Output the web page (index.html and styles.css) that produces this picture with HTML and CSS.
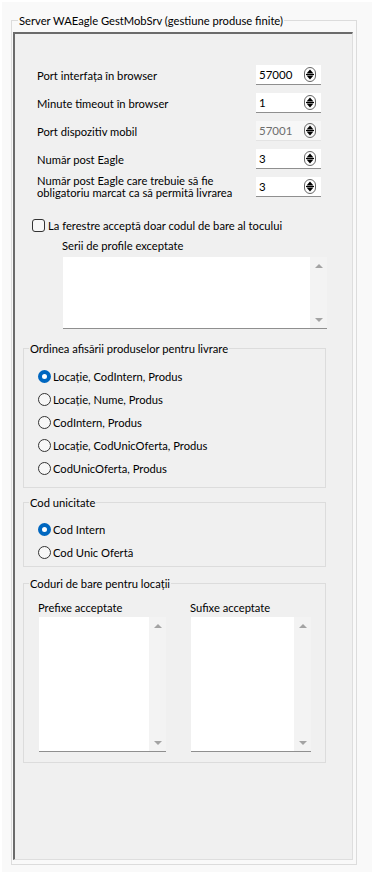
FILE: index.html
```html
<!DOCTYPE html>
<html lang="ro">
<head>
<meta charset="utf-8">
<title>Server WAEagle GestMobSrv</title>
<link rel="stylesheet" href="styles.css">
</head>
<body>
<div class="window">
  <fieldset class="group outer">
    <legend>Server WAEagle GestMobSrv (gestiune produse finite)</legend>
    <div class="panel">
      <div class="fields">
        <div class="label">Port interfața în browser</div>
        <div class="spin"><span class="val">57000</span><svg class="spin-ic" width="12" height="15" viewBox="0 0 12 15"><rect x="0.5" y="0.5" width="11" height="14" rx="5.5" fill="none" stroke="#666"/><path d="M6 2.5L9.5 6.5H2.5Z M2.5 8.5H9.5L6 12.5Z" fill="#000"/><path d="M2 7.5H10" stroke="#000"/></svg></div>
        <div class="label">Minute timeout în browser</div>
        <div class="spin"><span class="val">1</span><svg class="spin-ic" width="12" height="15" viewBox="0 0 12 15"><rect x="0.5" y="0.5" width="11" height="14" rx="5.5" fill="none" stroke="#666"/><path d="M6 2.5L9.5 6.5H2.5Z M2.5 8.5H9.5L6 12.5Z" fill="#000"/><path d="M2 7.5H10" stroke="#000"/></svg></div>
        <div class="label">Port dispozitiv mobil</div>
        <div class="spin disabled"><span class="val">57001</span><svg class="spin-ic" width="12" height="15" viewBox="0 0 12 15"><rect x="0.5" y="0.5" width="11" height="14" rx="5.5" fill="none" stroke="#666"/><path d="M6 2.5L9.5 6.5H2.5Z M2.5 8.5H9.5L6 12.5Z" fill="#000"/><path d="M2 7.5H10" stroke="#000"/></svg></div>
        <div class="label">Număr post Eagle</div>
        <div class="spin"><span class="val">3</span><svg class="spin-ic" width="12" height="15" viewBox="0 0 12 15"><rect x="0.5" y="0.5" width="11" height="14" rx="5.5" fill="none" stroke="#666"/><path d="M6 2.5L9.5 6.5H2.5Z M2.5 8.5H9.5L6 12.5Z" fill="#000"/><path d="M2 7.5H10" stroke="#000"/></svg></div>
        <div class="label two">Număr post Eagle care trebuie să fie<br>obligatoriu marcat ca să permită livrarea</div>
        <div class="spin"><span class="val">3</span><svg class="spin-ic" width="12" height="15" viewBox="0 0 12 15"><rect x="0.5" y="0.5" width="11" height="14" rx="5.5" fill="none" stroke="#666"/><path d="M6 2.5L9.5 6.5H2.5Z M2.5 8.5H9.5L6 12.5Z" fill="#000"/><path d="M2 7.5H10" stroke="#000"/></svg></div>
      </div>

      <div class="check"><span class="box"></span><span>La ferestre acceptă doar codul de bare al tocului</span></div>

      <div class="sub">
        <div class="sublabel">Serii de profile exceptate</div>
        <div class="listbox series">
          <div class="content"></div>
          <div class="sb"><span class="arr up"></span><span class="arr down"></span></div>
        </div>
      </div>

      <fieldset class="group g-order">
        <legend>Ordinea afisării produselor pentru livrare</legend>
        <div class="radio on"><span class="dot"></span><span>Locație, CodIntern, Produs</span></div>
        <div class="radio"><span class="dot"></span><span>Locație, Nume, Produs</span></div>
        <div class="radio"><span class="dot"></span><span>CodIntern, Produs</span></div>
        <div class="radio"><span class="dot"></span><span>Locație, CodUnicOferta, Produs</span></div>
        <div class="radio"><span class="dot"></span><span>CodUnicOferta, Produs</span></div>
      </fieldset>

      <fieldset class="group g-cod">
        <legend>Cod unicitate</legend>
        <div class="radio on"><span class="dot"></span><span>Cod Intern</span></div>
        <div class="radio"><span class="dot"></span><span>Cod Unic Ofertă</span></div>
      </fieldset>

      <fieldset class="group g-bar">
        <legend>Coduri de bare pentru locații</legend>
        <div class="cols">
          <div class="col c1">
            <div class="collabel">Prefixe acceptate</div>
            <div class="listbox tall">
              <div class="content"></div>
              <div class="sb"><span class="arr up"></span><span class="arr down"></span></div>
            </div>
          </div>
          <div class="col c2">
            <div class="collabel">Sufixe acceptate</div>
            <div class="listbox tall">
              <div class="content"></div>
              <div class="sb"><span class="arr up"></span><span class="arr down"></span></div>
            </div>
          </div>
        </div>
      </fieldset>
    </div>
  </fieldset>
</div>
</body>
</html>
```

FILE: styles.css
```css
* { box-sizing: border-box; }
html, body { margin: 0; padding: 0; background: #ffffff; }
body {
  font-family: "Lato", "Noto Sans", "Liberation Sans", sans-serif;
  font-size: 11.2px;
  line-height: 15px;
  color: #000;
}
.window {
  margin: 2px;
  width: 370px;
  height: 870px;
  background: #f9f9f9;
  padding: 10.5px 0 0 9px;
}
.group {
  margin: 0;
  border: 1px solid #dcdcdc;
  min-width: 0;
}
.group > legend {
  padding: 0 1px;
  margin-left: 5px;
  line-height: 15px;
  height: 15px;
}
.outer {
  width: 346px;
  height: 852px;
  padding: 4.5px 1px 1px 1px;
}
.panel {
  width: 340px;
  height: 828px;
  background: #f0f0f0;
  border-top: 2px solid #6b6b6b;
  border-left: 2px solid #6b6b6b;
  border-right: 1px solid #dedede;
  border-bottom: 1px solid #dedede;
  padding: 31px 0 0 0;
}
.fields {
  display: grid;
  grid-template-columns: 1fr 65px;
  grid-auto-rows: 20px;
  row-gap: 8px;
  padding: 0 31px 0 22px;
  width: 337px;
  align-items: center;
}
.label { white-space: nowrap; }
.label.two { line-height: 12.5px; }
.spin {
  height: 20px;
  background: #fff;
  border-bottom: 1px solid #8f8f8f;
  display: flex;
  align-items: center;
  padding: 0 5px 0 3px;
  font-size: 11.5px;
}
.spin .val { flex: 1; }
.spin.disabled { background: #f7f7f7; border-bottom-color: #e3e3e3; }
.spin.disabled .val { color: #6d6d6d; }
.spin-ic { display: block; }

.check {
  display: flex;
  align-items: center;
  margin: 21px 0 0 17px;
  height: 15px;
}
.check .box {
  width: 13px;
  height: 13px;
  border: 1px solid #333;
  border-radius: 3px;
  background: #f7f7f7;
  margin-right: 3px;
}
.sub { margin: 5px 0 0 47px; }
.sublabel { height: 15px; }
.listbox {
  display: flex;
  background: #fff;
  border-bottom: 1px solid #8f8f8f;
}
.listbox .content { flex: 1; }
.listbox .sb {
  width: 17px;
  background: #f3f3f3;
  display: flex;
  flex-direction: column;
  justify-content: space-between;
  align-items: center;
  padding: 7px 0 6px;
}
.arr {
  width: 0;
  height: 0;
  border-left: 4px solid transparent;
  border-right: 4px solid transparent;
}
.arr.up { border-bottom: 4px solid #a3a3a3; }
.arr.down { border-top: 4px solid #a3a3a3; }
.series {
  width: 264px;
  height: 72px;
  margin: 3.5px 0 0 1px;
}

.g-order, .g-cod, .g-bar { width: 303px; margin-left: 8px; }
.g-order > legend, .g-cod > legend, .g-bar > legend { margin-left: -9px; }
.g-order {
  margin-top: 12.5px;
  padding: 9px 0 7px 14px;
}
.radio {
  display: flex;
  align-items: center;
  height: 23px;
}
.radio .dot {
  width: 13px;
  height: 13px;
  border-radius: 50%;
  border: 1px solid #333;
  background: #f7f7f7;
  margin-right: 2px;
  flex: none;
}
.radio.on .dot {
  border: 4px solid #0067c0;
  background: #fff;
}
.g-cod {
  margin-top: 7px;
  padding: 8px 0 2px 14px;
}
.g-bar {
  margin-top: 8.5px;
  padding: 9px 0 10px 14px;
}
.cols { display: flex; gap: 24px; }
.c1 { width: 128px; }
.c2 { width: 121px; }
.collabel { height: 15px; margin-bottom: 2.5px; }
.tall { height: 135px; margin-left: 1px; }
```
